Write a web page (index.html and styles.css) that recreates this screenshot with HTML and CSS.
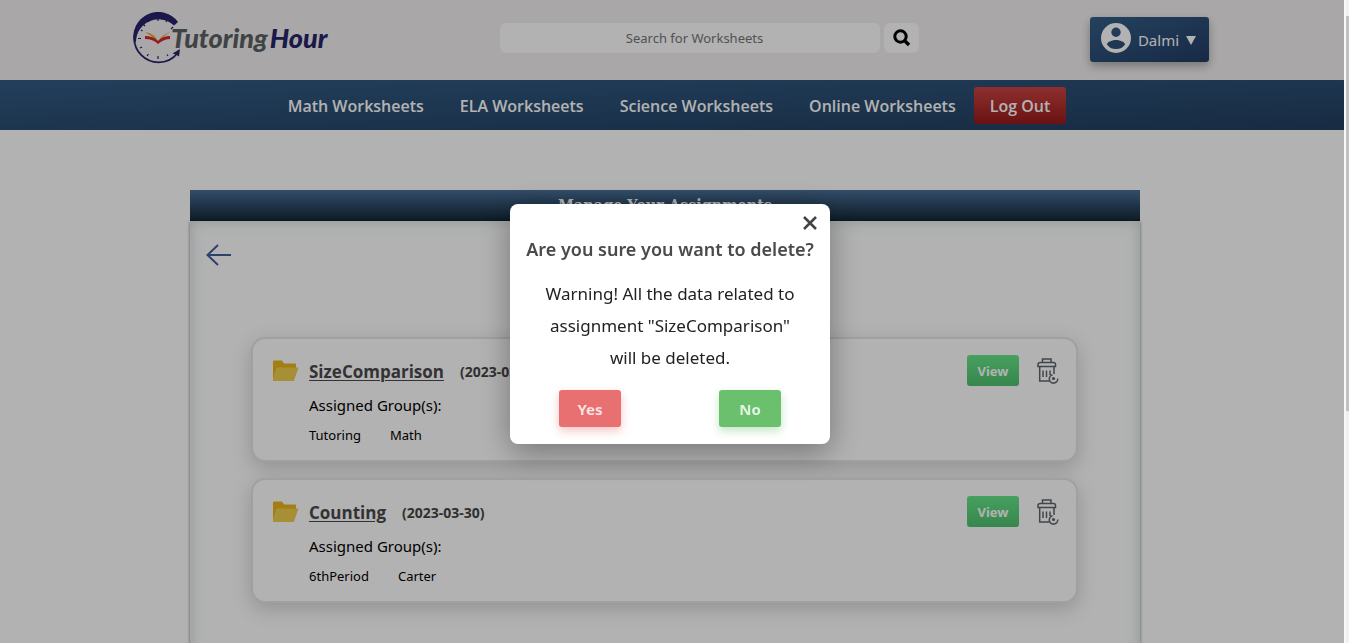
FILE: index.html
```html
<!DOCTYPE html>
<html lang="en">
<head>
<meta charset="utf-8">
<title>Tutoring Hour - Manage Your Assignments</title>
<link rel="stylesheet" href="styles.css">
</head>
<body>
<svg class="sprite" aria-hidden="true">
  <symbol id="folder" viewBox="0 0 26 22">
    <path d="M0 1.500Q0 .5 1 .5H9L11 3.500H22Q23 3.500 23 4.500V8H4L0 20Z" fill="#ebb51a"/>
    <path d="M4.500 7.500H25.500L21 20.500Q20.800 21 20 21H0V19Z" fill="#f0cd4e"/>
  </symbol>
  <symbol id="trash" viewBox="0 0 22 26">
    <g fill="none" stroke="#5d656c" stroke-width="1.500">
      <path d="M5.500 4.500V1H14V4.500"/>
      <path d="M3.500 4.500H11M13 4.500H16.500Q18.500 4.500 18.500 6.500V8.500H1V6.500Q1 4.500 3.500 4.500Z"/>
      <path d="M2.700 8.500V23H12.500M17 8.500V16M6 12.500V19M9.500 12.500V19M13 12.500V17"/>
      <path d="M15.500 16.800A4.200 4.200 0 1 0 20.700 20.500"/>
    </g>
    <circle cx="16.500" cy="20.500" r="1.600" fill="#5d656c"/>
  </symbol>
</svg>

<div class="page">
  <header class="top">
    <a class="logo" href="#">
      <svg class="clock" viewBox="0 0 50 52" aria-hidden="true">
        <circle cx="25.500" cy="26" r="24.300" fill="none" stroke="#27236a" stroke-width="1.800" pathLength="360" stroke-dasharray="280 80" stroke-dashoffset="-38"/>
        <path d="M1 30A24.700 24.700 0 0 1 45 10L41 13.500A22.500 22.500 0 0 0 3 30Z" fill="#27236a"/>
        <path d="M47 37L39.500 41.500L43 42.500L46 44.500Z" fill="#27236a"/>
        <path d="M25 6V9M25 44V47M5 26.500H8M10 12L12 14M8 18L9.500 19M34 8L33 10M40 15L38 17M15 8L16 10M7 36L9 35M14 44L15.500 42M35 44L34 42.500" stroke="#27236a" stroke-width="1.200"/>
        <path d="M12 20Q21 21 25 29Q29 23 37 20Q29 25 25 32Q21 25 12 20Z" fill="#e8a42b"/>
        <path d="M12 24Q20 24 25 29Q30 24 37 24V27Q31 27 25 32Q20 27 12 27Z" fill="#d3272f"/>
      </svg>
      <span class="word"><span class="grey">Tutoring</span><span class="navy">Hour</span></span>
    </a>
    <form class="search">
      <input type="text" placeholder="Search for Worksheets" aria-label="Search for Worksheets">
      <button type="button" aria-label="Search">
        <svg width="18" height="18" viewBox="0 0 18 18"><circle cx="7.500" cy="7.500" r="5.700" fill="none" stroke="#000" stroke-width="3"/><path d="M11.500 11.500L16 16" stroke="#000" stroke-width="3.400"/></svg>
      </button>
    </form>
    <button class="user" type="button">
      <svg width="30" height="30" viewBox="0 0 30 30" aria-hidden="true"><path fill-rule="evenodd" fill="#fff" d="M15 0A15 15 0 1 0 15 30A15 15 0 0 0 15 0ZM15 4.500A4.700 4.700 0 1 1 15 13.900A4.700 4.700 0 0 1 15 4.500ZM15 26Q9 26 6 21.500C6 18.500 12 17 15 17S24 18.500 24 21.500Q21 26 15 26Z"/></svg>
      <span class="name">Dalmi</span>
      <svg class="caret" width="10" height="9" viewBox="0 0 10 9" aria-hidden="true"><path d="M0 0H10L5 9Z" fill="#fff"/></svg>
    </button>
  </header>

  <nav class="bar">
    <a href="#">Math Worksheets</a>
    <a href="#">ELA Worksheets</a>
    <a href="#">Science Worksheets</a>
    <a href="#">Online Worksheets</a>
    <a class="logout" href="#">Log Out</a>
  </nav>

  <main class="content">
    <h1>Manage Your Assignments</h1>
    <div class="panel">
      <a class="back" href="#" aria-label="Back">
        <svg width="26" height="22" viewBox="0 0 26 22"><path d="M12 1L1.500 11L12 21M1.500 11H25" fill="none" stroke="#3f5f9a" stroke-width="2"/></svg>
      </a>
      <article class="card">
        <svg class="folder"><use href="#folder"/></svg>
        <div class="info">
          <div class="line"><a href="#">SizeComparison</a><span class="date">(2023-03-30)</span></div>
          <p class="label">Assigned Group(s):</p>
          <div class="groups"><span>Tutoring</span><span>Math</span></div>
        </div>
        <button class="view" type="button">View</button>
        <button class="trash" type="button" aria-label="Delete SizeComparison"><svg><use href="#trash"/></svg></button>
      </article>
      <article class="card">
        <svg class="folder"><use href="#folder"/></svg>
        <div class="info">
          <div class="line"><a href="#">Counting</a><span class="date">(2023-03-30)</span></div>
          <p class="label">Assigned Group(s):</p>
          <div class="groups"><span>6thPeriod</span><span>Carter</span></div>
        </div>
        <button class="view" type="button">View</button>
        <button class="trash" type="button" aria-label="Delete Counting"><svg><use href="#trash"/></svg></button>
      </article>
    </div>
  </main>
</div>

<div class="overlay">
  <section class="modal" role="dialog" aria-labelledby="ask">
    <button class="close" type="button" aria-label="Close"><svg width="14" height="14" viewBox="0 0 14 14"><path d="M1 1L13 13M13 1L1 13" stroke="#444" stroke-width="2.600"/></svg></button>
    <h2 id="ask">Are you sure you want to delete?</h2>
    <p>Warning! All the data related to<br>assignment "SizeComparison"<br>will be deleted.</p>
    <div class="choices">
      <button class="yes" type="button">Yes</button>
      <button class="no" type="button">No</button>
    </div>
  </section>
</div>
<div class="scroll"><div class="thumb"></div></div>
</body>
</html>
```
FILE: styles.css
```css
* { box-sizing: border-box; }
html, body { height: 100%; }
body {
  margin: 0;
  overflow: hidden;
  font-family: "Noto Sans", "Open Sans", sans-serif;
  font-size: 16px;
  color: #000;
  background: #fff;
}
button, input { font-family: inherit; border: 0; padding: 0; }
h1, h2, p { margin: 0; }
.sprite { display: none; }
.page { margin-right: 5px; display: flex; flex-direction: column; min-height: 100%; }

.top {
  height: 80px;
  padding: 0 135px 0 133px;
  display: flex;
  align-items: center;
  justify-content: space-between;
  background: #f3f0f1;
}
.logo { display: flex; align-items: center; width: 196px; text-decoration: none; padding-bottom: 5px; }
.clock { width: 50px; height: 52px; flex: none; }
.word {
  display: flex;
  gap: 2px;
  font: italic 900 27px Lato, "Liberation Sans", sans-serif;
  margin-left: -12px;
  white-space: nowrap;
}
.grey { color: #5c6063; }
.navy { color: #27236a; }
.search { display: flex; gap: 4px; padding-bottom: 4px; }
.search input {
  width: 380px;
  height: 30px;
  border-radius: 6px;
  background: #fff;
  font-size: 13px;
  text-align: center;
  padding-left: 9px;
}
.search input::placeholder { color: #757575; }
.search button {
  width: 35px;
  height: 30px;
  border-radius: 6px;
  background: #fff;
  display: flex;
  align-items: center;
  justify-content: center;
}
.user {
  width: 119px;
  height: 45px;
  margin-bottom: 2px;
  display: flex;
  align-items: center;
  justify-content: space-between;
  padding: 0 13px 2px 11px;
  color: #fff;
  font-size: 15px;
  border-radius: 3px;
  background: linear-gradient(160deg, #345f88, #223c63);
  box-shadow: 0 4px 10px rgba(0, 0, 0, .3);
}
.name, .caret { margin-top: 4px; }

.bar {
  height: 50px;
  display: flex;
  align-items: center;
  justify-content: center;
  padding-right: 8px;
  background: linear-gradient(178deg, #325b83, #223e60);
}
.bar a {
  color: #fff;
  font-family: "Open Sans", sans-serif;
  font-size: 16px;
  font-weight: 600;
  line-height: 35px;
  padding: 2px 18px 0;
  text-decoration: none;
  white-space: nowrap;
}
.bar .logout {
  padding: 2px 16px 0;
  border-radius: 3px;
  background: linear-gradient(#cd4343, #971b1b);
}

.content {
  flex: 1;
  width: 950px;
  max-width: 100%;
  margin: 60px 14px 0 0;
  align-self: center;
  display: flex;
  flex-direction: column;
}
.content h1 {
  font: bold 16px/31px "DejaVu Serif Condensed", "DejaVu Serif", serif;
  text-align: center;
  color: #fff;
  background: linear-gradient(#497099, #122636);
}
.panel {
  flex: 1;
  padding: 23px 62px 40px 61px;
  box-shadow: inset 0 0 14px rgba(150, 175, 175, .5), 0 1px 3px rgba(0, 0, 0, .5);
}
.back { display: block; margin: 0 0 71px -45px; height: 22px; }
.back svg { display: block; }
.card {
  display: flex;
  align-items: flex-start;
  height: 125px;
  margin-bottom: 16px;
  padding: 16px 17px 0 20px;
  border: 2px solid #e6e6e6;
  border-radius: 14px;
  background: #fff;
  box-shadow: 0 6px 20px rgba(0, 0, 0, .18);
}
.folder { width: 26px; height: 22px; margin: 5px 10px 0 0; flex: none; }
.info { flex: 1; }
.line { display: flex; align-items: center; gap: 16px; height: 32px; }
.line a { color: #4a484c; font-family: "Open Sans", sans-serif; font-size: 17px; font-weight: 700; text-underline-offset: 2px; }
.date { font-size: 14px; font-weight: 700; color: #454545; }
.label { font-size: 15px; line-height: 36px; }
.groups { display: flex; gap: 29px; font-size: 13px; line-height: 24px; }
.view {
  width: 52px;
  height: 31px;
  border-radius: 3px;
  color: #fff;
  font-size: 13px;
  font-weight: 700;
  background: linear-gradient(#65e688, #50c070);
}
.trash { width: 22px; height: 26px; margin: 3px 0 0 18px; background: none; }
.trash svg { display: block; width: 22px; height: 26px; }

.overlay {
  position: fixed;
  inset: 0 5px 0 0;
  padding: 5px 4px 0 0;
  display: flex;
  align-items: center;
  justify-content: center;
  background: rgba(0, 0, 0, .3);
}
.modal {
  width: 320px;
  border-radius: 8px;
  padding: 12px 13px 17px;
  background: #fff;
  box-shadow: 0 8px 32px rgba(0, 0, 0, .35);
  display: flex;
  flex-direction: column;
  text-align: center;
}
.close { align-self: flex-end; height: 14px; background: none; }
.close svg { display: block; }
.modal h2 { font-size: 18px; font-weight: 600; line-height: 38px; color: #4a4a4a; white-space: nowrap; margin: 0 -8px; }
.modal p { font-size: 17px; line-height: 32px; color: #222; margin: 10px -8px 16px; }
.choices { display: grid; grid-template-columns: 1fr 1fr; justify-items: center; margin: 0 -13px; }
.choices button {
  width: 62px;
  height: 37px;
  border-radius: 3px;
  font-size: 15px;
  font-weight: 700;
  color: rgba(255, 255, 255, .8);
}
.yes { background: #e87070; box-shadow: 0 4px 10px rgba(232, 112, 112, .4); }
.no { background: #6bc06e; box-shadow: 0 4px 10px rgba(107, 192, 110, .4); }

.scroll {
  position: fixed;
  inset: 0 0 0 auto;
  width: 5px;
  padding-top: 16px;
  border-left: 2px solid #f8f8f8;
  background: #f1f1f1;
}
.thumb { height: 63%; background: #c1c1c1; }
```
